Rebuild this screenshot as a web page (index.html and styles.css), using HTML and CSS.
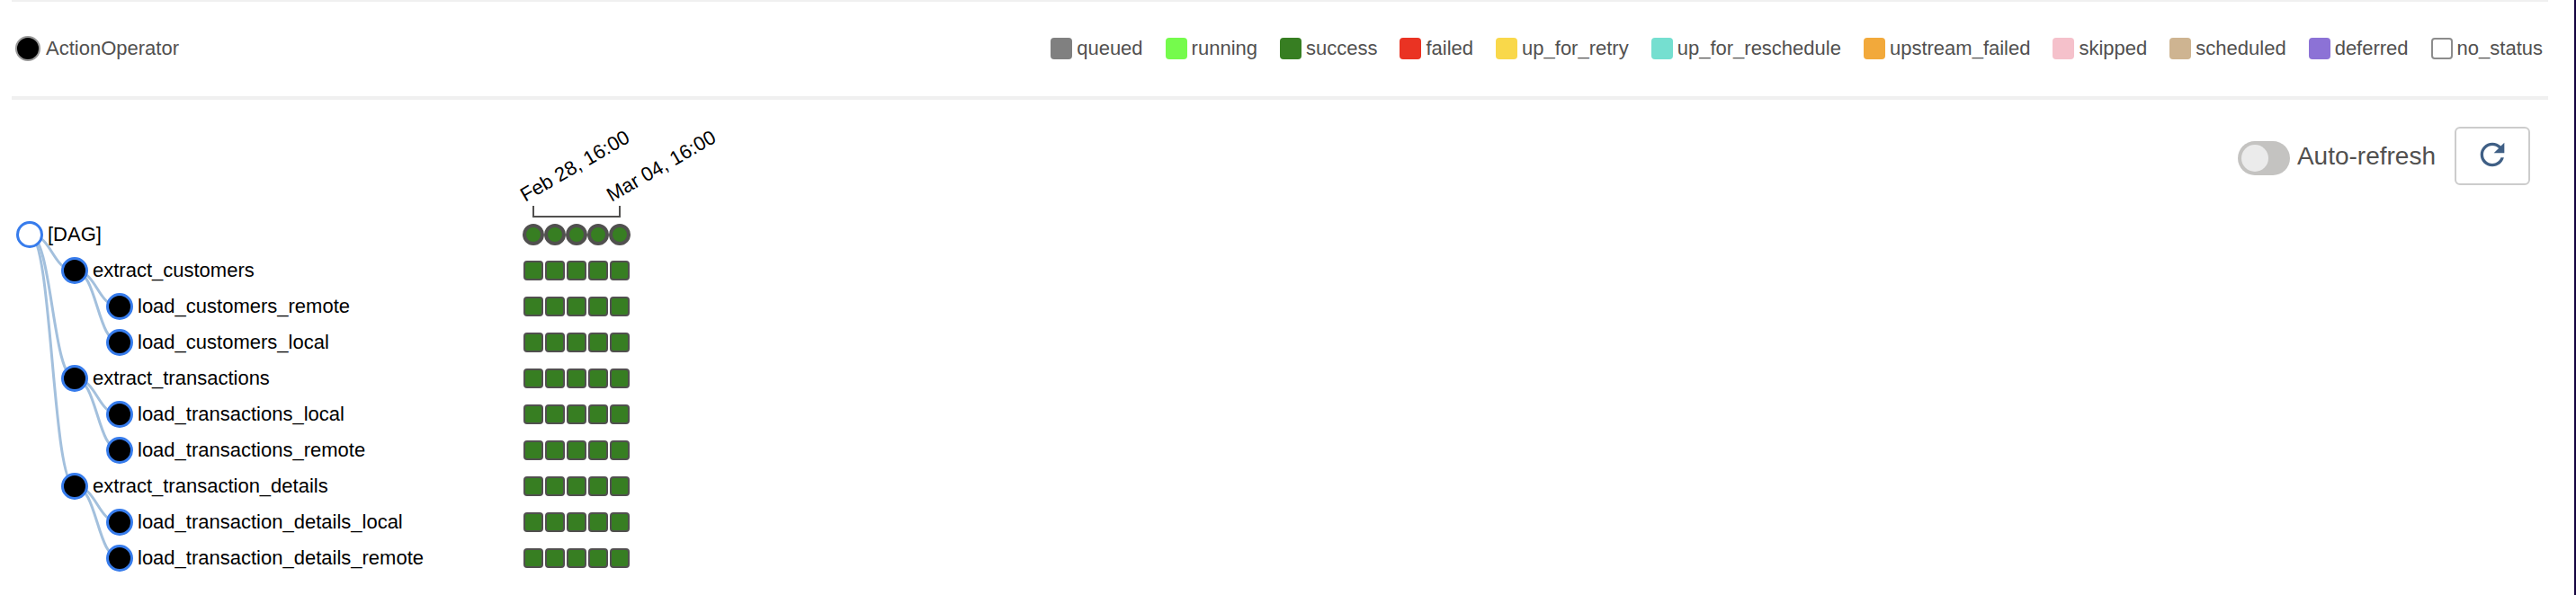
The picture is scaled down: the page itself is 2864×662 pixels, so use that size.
FILE: index.html
```html
<!DOCTYPE html>
<html lang="en">
<head>
<meta charset="utf-8">
<title>DAG tree view</title>
<link rel="stylesheet" href="styles.css">
</head>
<body>
<main class="page">
  <header class="legend">
    <div class="operator"><span class="operator-dot"></span>ActionOperator</div>
    <ul class="states">
      <li class="state"><span class="swatch queued"></span>queued</li>
      <li class="state"><span class="swatch running"></span>running</li>
      <li class="state"><span class="swatch success"></span>success</li>
      <li class="state"><span class="swatch failed"></span>failed</li>
      <li class="state"><span class="swatch up-for-retry"></span>up_for_retry</li>
      <li class="state"><span class="swatch up-for-reschedule"></span>up_for_reschedule</li>
      <li class="state"><span class="swatch upstream-failed"></span>upstream_failed</li>
      <li class="state"><span class="swatch skipped"></span>skipped</li>
      <li class="state"><span class="swatch scheduled"></span>scheduled</li>
      <li class="state"><span class="swatch deferred"></span>deferred</li>
      <li class="state"><span class="swatch no-status"></span>no_status</li>
    </ul>
  </header>

  <section class="content">
    <svg class="tree" width="860" height="540" viewBox="13 111 860 540" role="img" aria-label="Task tree with run states">
      <defs>
        <g id="runs">
          <rect x="583" y="-10" width="20" height="20" rx="3"/>
          <rect x="607" y="-10" width="20" height="20" rx="3"/>
          <rect x="631" y="-10" width="20" height="20" rx="3"/>
          <rect x="655" y="-10" width="20" height="20" rx="3"/>
          <rect x="679" y="-10" width="20" height="20" rx="3"/>
        </g>
      </defs>

      <g class="links">
        <path d="M33 261C58 261 58 301 83 301"/>
        <path d="M33 261C58 261 58 421 83 421"/>
        <path d="M33 261C58 261 58 541 83 541"/>
        <path d="M83 301C108 301 108 341 133 341"/>
        <path d="M83 301C108 301 108 381 133 381"/>
        <path d="M83 421C108 421 108 461 133 461"/>
        <path d="M83 421C108 421 108 501 133 501"/>
        <path d="M83 541C108 541 108 581 133 581"/>
        <path d="M83 541C108 541 108 621 133 621"/>
      </g>

      <g class="nodes">
        <circle class="root" cx="33" cy="261" r="13.5"/><text x="53" y="268">[DAG]</text>
        <circle cx="83" cy="301" r="13.5"/><text x="103" y="308">extract_customers</text>
        <circle cx="133" cy="341" r="13.5"/><text x="153" y="348">load_customers_remote</text>
        <circle cx="133" cy="381" r="13.5"/><text x="153" y="388">load_customers_local</text>
        <circle cx="83" cy="421" r="13.5"/><text x="103" y="428">extract_transactions</text>
        <circle cx="133" cy="461" r="13.5"/><text x="153" y="468">load_transactions_local</text>
        <circle cx="133" cy="501" r="13.5"/><text x="153" y="508">load_transactions_remote</text>
        <circle cx="83" cy="541" r="13.5"/><text x="103" y="548">extract_transaction_details</text>
        <circle cx="133" cy="581" r="13.5"/><text x="153" y="588">load_transaction_details_local</text>
        <circle cx="133" cy="621" r="13.5"/><text x="153" y="628">load_transaction_details_remote</text>
      </g>

      <path class="axis" d="M593 229V241H689V229"/>
      <text transform="translate(584 225) rotate(-30)">Feb 28, 16:00</text>
      <text transform="translate(680 225) rotate(-30)">Mar 04, 16:00</text>

      <g class="dag-runs">
        <circle cx="593" cy="261" r="10"/>
        <circle cx="617" cy="261" r="10"/>
        <circle cx="641" cy="261" r="10"/>
        <circle cx="665" cy="261" r="10"/>
        <circle cx="689" cy="261" r="10"/>
      </g>
      <g class="task-runs">
        <use href="#runs" y="301"/>
        <use href="#runs" y="341"/>
        <use href="#runs" y="381"/>
        <use href="#runs" y="421"/>
        <use href="#runs" y="461"/>
        <use href="#runs" y="501"/>
        <use href="#runs" y="541"/>
        <use href="#runs" y="581"/>
        <use href="#runs" y="621"/>
      </g>
    </svg>

    <div class="controls">
      <label class="auto-refresh">
        <input class="toggle" type="checkbox" role="switch">
        <span>Auto-refresh</span>
      </label>
      <button class="refresh" type="button" aria-label="Refresh">
        <svg width="40" height="40" viewBox="0 0 24 24" aria-hidden="true">
          <path d="M17.65 6.35C16.2 4.9 14.21 4 12 4c-4.42 0-7.99 3.58-7.99 8s3.57 8 7.99 8c3.73 0 6.84-2.55 7.73-6h-2.08c-.82 2.33-3.04 4-5.65 4-3.31 0-6-2.69-6-6s2.69-6 6-6c1.66 0 3.14.69 4.22 1.78L13 11h7V4l-2.35 2.35z"/>
        </svg>
      </button>
    </div>
  </section>
</main>
</body>
</html>
```
FILE: styles.css
```css
* {
  box-sizing: border-box;
}

body {
  margin: 0;
  min-height: 100vh;
  display: flex;
  background: #fff;
  border-right: 2px solid #150440;
  color: #51504f;
  font: 22px/28px "Liberation Sans", Arial, sans-serif;
}

.page {
  flex: 1;
  margin: 0 29px 0 13px;
}

.legend {
  display: flex;
  align-items: center;
  justify-content: space-between;
  padding: 38px 6px 39px 4px;
  border-top: 2px solid #f0f0f0;
  border-bottom: 4px solid #f0f0f0;
}

.operator {
  display: flex;
  align-items: center;
  gap: 6px;
}

.operator-dot {
  width: 28px;
  height: 28px;
  border: 2px solid #999;
  border-radius: 50%;
  background: #000;
}

.states {
  display: flex;
  gap: 25px;
  margin: 0;
  padding: 0;
  list-style: none;
}

.state {
  display: flex;
  align-items: center;
  gap: 5px;
}

.swatch {
  width: 24px;
  height: 24px;
  border-radius: 4px;
}

.queued { background: #808080; }
.running { background: #75fb4c; }
.success { background: #377e22; }
.failed { background: #ea3323; }
.up-for-retry { background: #f9d84a; }
.up-for-reschedule { background: #75dfd0; }
.upstream-failed { background: #f2a93b; }
.skipped { background: #f5c1cb; }
.scheduled { background: #ceb491; }
.deferred { background: #8c72d6; }
.no-status { border: 2px solid #8c8c8c; }

.content {
  display: flex;
  align-items: flex-start;
  justify-content: space-between;
}

.tree {
  display: block;
  fill: #000;
}

.links path {
  fill: none;
  stroke: #a3c0dd;
  stroke-width: 3px;
}

.nodes circle {
  fill: #000;
  stroke: #377cec;
  stroke-width: 3px;
}

.nodes .root {
  fill: #fff;
}

.axis {
  fill: none;
  stroke: #51504f;
  stroke-width: 2px;
}

.dag-runs {
  fill: #377e22;
  stroke: #51504f;
  stroke-width: 4px;
}

.task-runs {
  fill: #377e22;
  stroke: #51504f;
  stroke-width: 2px;
}

.controls {
  display: flex;
  align-items: center;
  gap: 21px;
  padding: 30px 20px 0 0;
}

.auto-refresh {
  display: flex;
  align-items: center;
  gap: 8px;
  padding-top: 4px;
  font-size: 28px;
  line-height: 32px;
}

.auto-refresh span {
  padding-bottom: 4px;
}

.toggle {
  appearance: none;
  display: flex;
  width: 58px;
  height: 38px;
  margin: 0;
  padding: 4px;
  border-radius: 19px;
  background: #c4c3c1;
}

.toggle::before {
  content: "";
  width: 30px;
  height: 30px;
  border-radius: 50%;
  background: #ebebeb;
}

.toggle:checked {
  justify-content: flex-end;
  background: #377cec;
}

.refresh {
  padding: 9px 20px 12px;
  border: 2px solid #ccc;
  border-radius: 6px;
  background: #fff;
}

.refresh svg {
  display: block;
  fill: #3f5f85;
}
```
